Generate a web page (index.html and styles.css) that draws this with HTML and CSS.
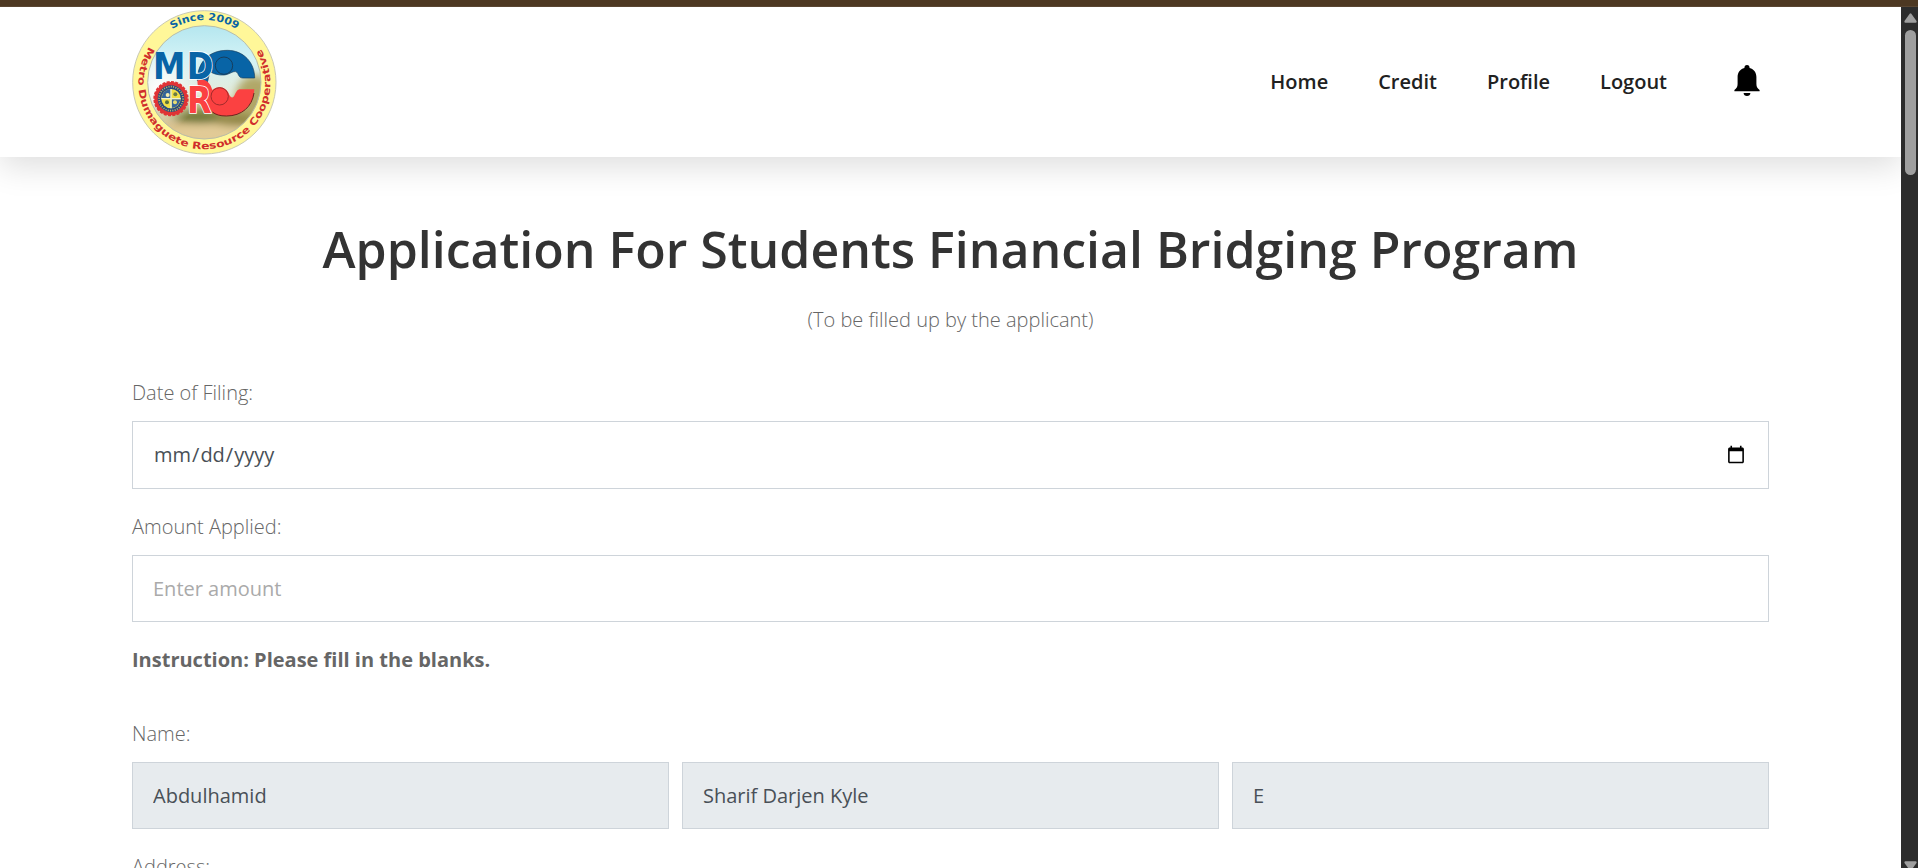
FILE: index.html
```html
<!DOCTYPE html>
<html lang="en">
<head>
<meta charset="utf-8">
<title>Application For Students Financial Bridging Program</title>
<link rel="stylesheet" href="styles.css">
</head>
<body>
<div class="topbar"></div>
<div class="viewport">
  <div class="page">
    <header class="header">
      <svg class="logo" viewBox="36 30 435 435">
        <defs>
          <linearGradient id="sky" x1="0" y1="0" x2="0" y2="1">
            <stop offset="0" stop-color="#b4e6ef"/><stop offset=".3" stop-color="#d3f3f6"/>
            <stop offset=".6" stop-color="#e4ecdc"/><stop offset=".75" stop-color="#b0ab70"/>
            <stop offset=".86" stop-color="#d0b881"/><stop offset="1" stop-color="#e3cc98"/>
          </linearGradient>
          <radialGradient id="glow"><stop offset="0" stop-color="#fff"/><stop offset="1" stop-color="#fff" stop-opacity="0"/></radialGradient>
          <clipPath id="disc"><circle cx="253" cy="247" r="170"/></clipPath>
          <filter id="soft" x="-30%" y="-30%" width="160%" height="160%"><feGaussianBlur stdDeviation="12"/></filter>
          <path id="arcTop" d="M66 247A187 187 0 0 1 440 247"/>
          <path id="arcBottom" d="M88 140A198 198 0 1 0 418 140"/>
        </defs>
        <circle cx="253" cy="247" r="215" fill="#fff799" stroke="#c9c9b4" stroke-width="3"/>
        <g clip-path="url(#disc)">
          <rect x="80" y="75" width="350" height="345" fill="url(#sky)"/>
          <g filter="url(#soft)">
            <ellipse cx="405" cy="300" rx="60" ry="75" fill="#b0a768"/>
            <ellipse cx="240" cy="352" rx="80" ry="16" fill="#66702f"/>
            <ellipse cx="345" cy="360" rx="60" ry="18" fill="#8d8340"/>
            <ellipse cx="270" cy="395" rx="130" ry="18" fill="#e3cc98"/>
          </g>
          <ellipse cx="120" cy="270" rx="110" ry="125" fill="url(#glow)"/>
        </g>
        <circle cx="253" cy="247" r="170" fill="none" stroke="#b9bda8" stroke-width="3"/>
        <text class="logo-ring blue" font-size="30"><textPath href="#arcTop" startOffset="192" textLength="205" lengthAdjust="spacingAndGlyphs">Since 2009</textPath></text>
        <text class="logo-ring red" font-size="29"><textPath href="#arcBottom" textLength="846" lengthAdjust="spacingAndGlyphs">Metro Dumaguete Resource Cooperative</textPath></text>
        <path d="M232 242C232 188 265 151 322 151C370 151 404 187 404 234H368C360 234 357 229 353 220C345 206 330 224 312 225C296 226 282 222 272 216C264 226 266 242 260 250C250 238 241 238 232 242Z" fill="#0864a6" stroke="#173d5c" stroke-width="2"/>
        <circle cx="312" cy="197" r="26" fill="#0864a6" stroke="#173d5c" stroke-width="3"/>
        <path d="M232 242C250 232 270 244 277 270C290 258 314 258 324 276C330 289 334 298 342 289C349 276 350 268 363 268H403C401 314 369 348 319 348C285 348 270 334 262 314C260 290 232 280 232 242Z" fill="#fb4141"/>
        <path d="M402 279C396 320 366 348 319 348C300 348 287 344 277 336" fill="none" stroke="#71211d" stroke-width="3"/>
        <circle cx="299" cy="289" r="26" fill="#fb4141" stroke="#a22b2b" stroke-width="3"/>
        <text class="logo-big blue" x="99" y="238" font-size="111" textLength="97" lengthAdjust="spacingAndGlyphs">M</text>
        <text class="logo-big blue outlined" x="200" y="238" font-size="111" textLength="80" lengthAdjust="spacingAndGlyphs">D</text>
        <text class="logo-big red outlined" x="201" y="340" font-size="111" textLength="74" lengthAdjust="spacingAndGlyphs">R</text>
        <circle cx="153" cy="296" r="45" fill="#274b80" stroke="#e03335" stroke-width="10"/>
        <circle cx="153" cy="296" r="50" fill="none" stroke="#e03335" stroke-width="6" stroke-dasharray="9 4"/>
        <circle cx="153" cy="296" r="36" fill="none" stroke="#c9bb60" stroke-width="5" stroke-dasharray="3 4"/>
        <circle cx="153" cy="296" r="29" fill="#f1df46"/>
        <path d="M128 282A29 29 0 0 1 152 267V294H125ZM155 298H181A29 29 0 0 1 155 324Z" fill="#34649a"/>
        <path d="M153 267V325M124 296H182" stroke="#eef0d0" stroke-width="4"/>
        <circle cx="143" cy="285" r="6" fill="#f6eeb0"/><circle cx="166" cy="283" r="6" fill="#6c7b43"/>
        <circle cx="141" cy="307" r="6" fill="#58713f"/><circle cx="165" cy="307" r="6" fill="#e6dc72"/>
      </svg>
      <nav class="nav">
        <a>Home</a><a>Credit</a><a>Profile</a><a>Logout</a>
        <svg class="bell" viewBox="0 0 26 31"><path d="M13 0C14.7 0 15.6 1.1 15.6 2.9C20 4 22.4 7.6 22.4 12V19C22.4 22 23.5 23.5 25.6 25V26.2H.4V25C2.500 23.500 3.600 22 3.600 19V12C3.600 7.600 6 4 10.400 2.900C10.400 1.100 11.300 0 13 0ZM9.600 28H16.400C16.400 29.800 15 31 13 31C11 31 9.600 29.800 9.600 28Z"/></svg>
      </nav>
    </header>
    <main class="form">
      <h1>Application For Students Financial Bridging Program</h1>
      <p class="subtitle">(To be filled up by the applicant)</p>
      <label class="label">Date of Filing:</label>
      <input class="control date" type="date">
      <label class="label">Amount Applied:</label>
      <input class="control" type="text" placeholder="Enter amount">
      <p class="instruction">Instruction: Please fill in the blanks.</p>
      <label class="label">Name:</label>
      <div class="row">
        <input class="control" readonly value="Abdulhamid">
        <input class="control" readonly value="Sharif Darjen Kyle">
        <input class="control" readonly value="E">
      </div>
      <label class="label">Address:</label>
    </main>
  </div>
  <div class="scrollbar">
    <svg class="arrow" viewBox="0 0 13 10"><path d="M5.700 .8Q6.500-.2 7.300 .8L12.500 8Q13 9.600 11.500 9.700H1.500Q0 9.600 .5 8Z"/></svg>
    <div class="thumb"></div>
    <svg class="arrow" viewBox="0 0 13 10"><path d="M5.700 9.200Q6.500 10.200 7.300 9.200L12.500 2Q13 .4 11.500 .3H1.500Q0 .4 .5 2Z"/></svg>
  </div>
</div>
</body>
</html>
```
FILE: styles.css
```css
* { box-sizing: border-box; }
html, body { height: 100%; }
body {
  margin: 0;
  overflow: hidden;
  display: flex;
  flex-direction: column;
  background: #fff;
  color: #666;
  font: 300 20px/30px "Open Sans", "Noto Sans", sans-serif;
}
.topbar { flex: none; height: 7px; background: #4d3822; border-bottom: 1px solid #5a4632; }
.viewport { flex: 1; display: flex; min-height: 0; }
.page { flex: 1; overflow: hidden; }
.header {
  display: flex;
  align-items: center;
  justify-content: space-between;
  height: 150px;
  padding: 0 140px 0 132px;
  background: #fff;
  box-shadow: 0 10px 30px rgba(0, 0, 0, .13);
}
.logo { width: 145px; height: 145px; }
.logo-ring { font-family: "DejaVu Sans", sans-serif; font-weight: 700; }
.logo-big { font-family: "DejaVu Sans", sans-serif; font-weight: 700; }
.outlined { stroke: #fff; stroke-width: 5px; paint-order: stroke; }
.blue { fill: #0864a6; }
.red { fill: #fb4141; }
.logo-ring.red { fill: #d02f2c; }
.nav { display: flex; align-items: center; gap: 50px; color: #212121; font-weight: 600; }
.bell { width: 26px; height: 31px; margin: 0 1px 3px 17px; fill: #000; }
.form { display: flex; flex-direction: column; padding: 62px 132px 0; }
h1 { margin: 0; color: #333; font-size: 50px; line-height: 60px; font-weight: 600; text-align: center; white-space: nowrap; }
.subtitle { margin: 26px 0 43px; text-align: center; }
.label { margin-bottom: 13px; }
.control {
  width: 100%;
  height: 67px;
  margin: 0 0 23px;
  padding: 0 20px;
  border: 1px solid #ced4da;
  border-radius: 0;
  outline: 0;
  background: #fff;
  color: #495057;
  font: 400 20px/30px "Open Sans", "Noto Sans", sans-serif;
}
.control.date { height: 68px; }
.control::placeholder { color: #aaa; opacity: 1; }
.control[readonly] { background: #e7ebee; }
.instruction { margin: 0 0 44px; font-weight: 700; }
.row { display: flex; gap: 13px; }
.scrollbar {
  flex: none;
  display: flex;
  flex-direction: column;
  align-items: center;
  width: 17px;
  padding-top: 6px;
  background: #2c2c2c;
  overflow: hidden;
}
.arrow { flex: none; width: 13px; height: 10px; margin-left: 1px; fill: #9f9f9f; }
.thumb { flex: none; width: 11px; height: 145px; margin: 7px 0 686px 2px; border-radius: 6px; background: #9f9f9f; }
```
